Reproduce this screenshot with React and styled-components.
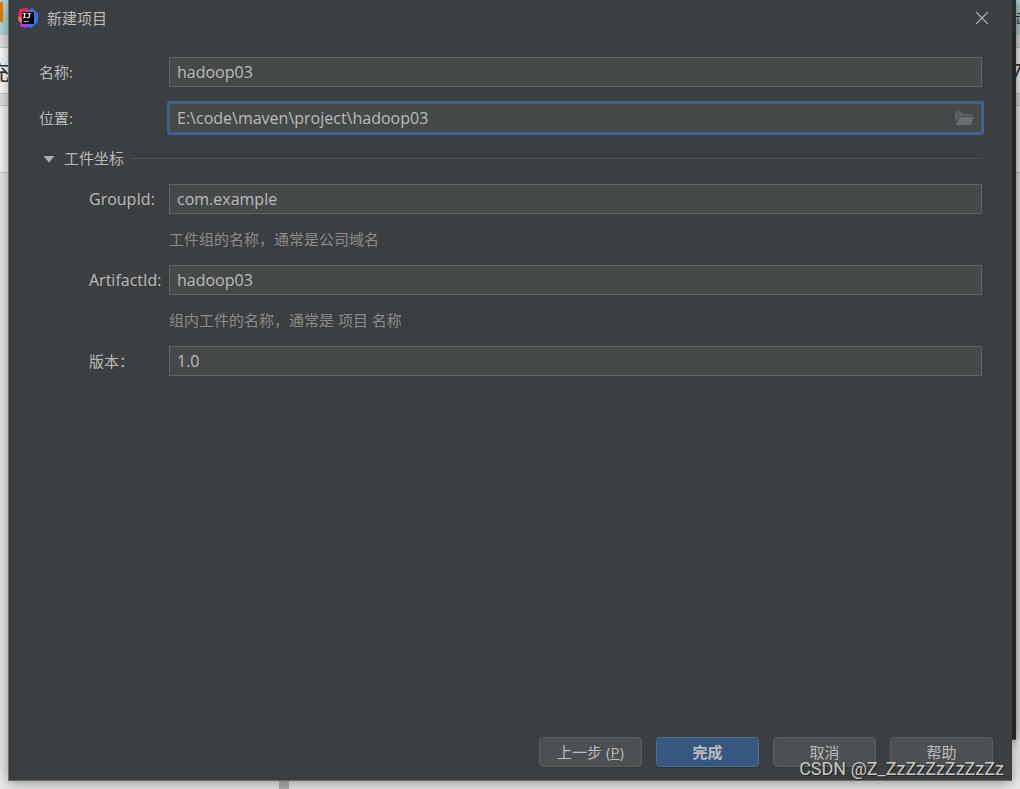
import { useState } from "react";
import styled, { createGlobalStyle } from "styled-components";

const GlobalStyle = createGlobalStyle`
  *, *::before, *::after {
    box-sizing: border-box;
  }

  body {
    margin: 0;
    font-family: "Open Sans", "Noto Sans CJK SC", sans-serif;
    font-size: 15px;
    line-height: 20px;
    color: #bbbbbb;
  }

  button,
  input {
    font: inherit;
    color: inherit;
  }
`;

const Desktop = styled.div`
  position: relative;
  display: flex;
  min-height: 100vh;
  padding: 0 8px 8px;
  overflow: hidden;
  background: #ececec;
`;

const Backdrop = styled.div`
  position: absolute;
  inset: 0;
  display: flex;
  flex-direction: column;
`;

const Band = styled.div`
  display: flex;
  justify-content: space-between;
  align-items: center;
  flex: none;
  height: ${(props) => props.$height}px;
  background: ${(props) => props.$color};
  border-bottom: 1px solid #cccccc;
  overflow: hidden;
`;

const TabIcon = styled.span`
  width: 3px;
  height: 20px;
  margin-bottom: 10px;
  background: #ef7c00;
`;

const PageText = styled.span`
  display: flex;
  justify-content: ${(props) => props.$side};
  width: ${(props) => (props.$small ? 5 : 10)}px;
  overflow: hidden;
  font-size: ${(props) => (props.$small ? 15 : 22)}px;
  line-height: 30px;
  color: #333333;
`;

const ScrollThumb = styled.div`
  position: absolute;
  left: 279px;
  bottom: 0;
  width: 10px;
  height: 24px;
  background: #b4b4b4;
`;

const RearWindow = styled.div`
  position: absolute;
  top: 0;
  right: 4px;
  bottom: 49px;
  width: 40px;
  background: linear-gradient(#343739 33px, #2b2b2b 33px);
  border-bottom: 1px solid #565656;
  box-shadow: 0 0 14px rgba(0, 0, 0, 0.45);
`;

const Dialog = styled.main`
  position: relative;
  display: flex;
  flex: 1;
  flex-direction: column;
  border: 1px solid #6a6a6a;
  border-width: 0 0 1px 1px;
  background: #3c3f41;
  box-shadow: 0 2px 14px rgba(0, 0, 0, 0.4);
`;

const TitleBar = styled.header`
  display: flex;
  align-items: center;
  gap: 9px;
  height: 36px;
  padding: 0 24px 0 9px;
`;

const Title = styled.h1`
  flex: 1;
  margin: 0;
  font-size: 15px;
  font-weight: 400;
`;

const CloseButton = styled.button`
  display: flex;
  padding: 0;
  border: none;
  background: none;
  cursor: pointer;
`;

const Form = styled.form`
  display: flex;
  flex: 1;
  flex-direction: column;
`;

const Fields = styled.div`
  display: flex;
  flex: 1;
  flex-direction: column;
  gap: 16px;
  padding: 21px 30px 0;
`;

const Row = styled.div`
  display: flex;
  align-items: center;
`;

const Label = styled.label`
  flex: none;
  width: ${(props) => (props.$nested ? 80 : 130)}px;
  font-size: ${(props) => (props.$latin ? 16 : 15)}px;
  white-space: nowrap;
`;

const InputBox = styled.div`
  display: flex;
  flex: 1;
  align-items: center;
  height: 30px;
  padding-right: 7px;
  border: 1px solid #646464;
  background: #45494a;

  &:focus-within {
    border-color: #3d6185;
    border-radius: 1px;
    box-shadow: 0 0 0 2px #3d6590;
  }
`;

const Input = styled.input`
  flex: 1;
  min-width: 0;
  padding: 0 7px;
  border: none;
  outline: none;
  background: none;
  font-size: 16px;
`;

const BrowseButton = styled.button`
  display: flex;
  padding: 0;
  border: none;
  background: none;
`;

const SectionToggle = styled.button`
  display: flex;
  align-items: center;
  gap: 9px;
  width: 100%;
  padding: 0 0 0 4px;
  border: none;
  background: none;
  line-height: 19px;

  &::after {
    content: "";
    flex: 1;
    height: 1px;
    margin-left: -2px;
    background: #515457;
  }
`;

const Section = styled.div`
  display: flex;
  flex-direction: column;
  gap: 16px;
  padding-left: 50px;
`;

const Hint = styled.p`
  margin: 0;
  padding-left: 80px;
  line-height: 19px;
  color: #8c8c8c;
`;

const Footer = styled.footer`
  display: flex;
  justify-content: flex-end;
  gap: 14px;
  padding: 0 19px 13px;
`;

const Button = styled.button`
  width: 103px;
  height: 30px;
  padding: 0;
  border: 1px solid ${(props) => (props.$primary ? "#4c708c" : "#5e6060")};
  border-radius: 4px;
  background: ${(props) => (props.$primary ? "#365880" : "#4c5052")};
  font-weight: ${(props) => (props.$primary ? 700 : 400)};
  box-shadow: 0 1px 1px rgba(0, 0, 0, 0.15);
`;

const Watermark = styled.span`
  position: absolute;
  right: 16px;
  bottom: 8px;
  font-family: Roboto, "Liberation Sans", sans-serif;
  font-size: 18px;
  line-height: 24px;
  color: #c8c8c8;
  text-shadow: 1px 1px 1px #222222;
  pointer-events: none;
`;

const IdeaLogo = () => (
  <svg width="20" height="20" viewBox="0 0 20 20" aria-hidden="true">
    <path d="M0 9 4 6 6 15 1 14z" fill="#fc801d" />
    <path d="M2 1 9 0 13 4 7 14 4 11 0 7z" fill="#f52568" />
    <path d="M9 4 14 0 20 5 20 14 13 20 7 18z" fill="#3871e1" />
    <path d="M3 12 10 17 8 20 2 18z" fill="#b33be0" />
    <rect x="4" y="4" width="12" height="12" fill="#000" />
    <path
      d="M5 5.5h3M6.500 5.500v4M5 9.500h3M9.500 5.500h3M11.500 5.500v3q0 1.200-2.300 1"
      fill="none"
      stroke="#fff"
      strokeWidth="1.2"
    />
    <path d="M5.500 13.500h5" stroke="#bbb" />
  </svg>
);

const CloseIcon = () => (
  <svg width="12" height="12" viewBox="0 0 12 12" aria-hidden="true">
    <path d="M0 0 12 12M12 0 0 12" stroke="#bbbbbb" strokeWidth="1.2" />
  </svg>
);

const FolderIcon = () => (
  <svg width="19" height="15" viewBox="0 0 19 15" aria-hidden="true">
    <path d="M0 12V0h6l2 3h9v2H4z" fill="#5b6164" />
    <path d="M4.500 6H19l-3 8H1z" fill="#667074" />
  </svg>
);

const ArrowIcon = () => (
  <svg width="12" height="8" viewBox="0 0 12 8" aria-hidden="true">
    <path d="M.5 1h11L6 7.500z" fill="#adadad" />
  </svg>
);

const Field = ({
  id,
  label,
  nested,
  latin,
  value,
  onChange,
  autoFocus,
  children,
}) => (
  <Row>
    <Label htmlFor={id} $nested={nested} $latin={latin}>
      {label}
    </Label>
    <InputBox>
      <Input
        id={id}
        value={value}
        onChange={onChange}
        autoFocus={autoFocus}
        spellCheck={false}
      />
      {children}
    </InputBox>
  </Row>
);

const App = () => {
  const [isOpen, setIsOpen] = useState(true);
  const [values, setValues] = useState({
    name: "hadoop03",
    location: "E:\\code\\maven\\project\\hadoop03",
    groupId: "com.example",
    artifactId: "hadoop03",
    version: "1.0",
  });

  const bind = (key) => ({
    id: key,
    value: values[key],
    onChange: (event) => setValues({ ...values, [key]: event.target.value }),
  });

  return (
    <Desktop>
      <GlobalStyle />
      <Backdrop>
        <Band $height={35} $color="#b0d9dc">
          <TabIcon />
          <PageText $side="flex-start" $small>
            击
          </PageText>
        </Band>
        <Band $height={13} $color="#e4e4e4" />
        <Band $height={46} $color="#ffffff">
          <PageText $side="flex-end">充</PageText>
          <PageText $side="flex-start">7</PageText>
        </Band>
        <Band $height={12} $color="#e4e4e4" />
        <Band $height={67} $color="#f7f7f7" />
      </Backdrop>
      <ScrollThumb />
      <RearWindow />
      <Dialog>
        <TitleBar>
          <IdeaLogo />
          <Title>新建项目</Title>
          <CloseButton type="button" aria-label="关闭">
            <CloseIcon />
          </CloseButton>
        </TitleBar>
        <Form onSubmit={(event) => event.preventDefault()}>
          <Fields>
            <Field label="名称:" {...bind("name")} />
            <Field label="位置:" autoFocus {...bind("location")}>
              <BrowseButton type="button" aria-label="浏览">
                <FolderIcon />
              </BrowseButton>
            </Field>
            <SectionToggle
              type="button"
              aria-expanded={isOpen}
              onClick={() => setIsOpen(!isOpen)}
            >
              <ArrowIcon />
              工件坐标
            </SectionToggle>
            {isOpen && (
              <Section>
                <Field label="GroupId:" nested latin {...bind("groupId")} />
                <Hint>工件组的名称，通常是公司域名</Hint>
                <Field
                  label="ArtifactId:"
                  nested
                  latin
                  {...bind("artifactId")}
                />
                <Hint>组内工件的名称，通常是 项目 名称</Hint>
                <Field label="版本：" nested {...bind("version")} />
              </Section>
            )}
          </Fields>
          <Footer>
            <Button type="button">
              上一步 (<u>P</u>)
            </Button>
            <Button type="submit" $primary>
              完成
            </Button>
            <Button type="button">取消</Button>
            <Button type="button">帮助</Button>
          </Footer>
        </Form>
      </Dialog>
      <Watermark>CSDN @Z_ZzZzZzZzZzZz</Watermark>
    </Desktop>
  );
};

export default App;
